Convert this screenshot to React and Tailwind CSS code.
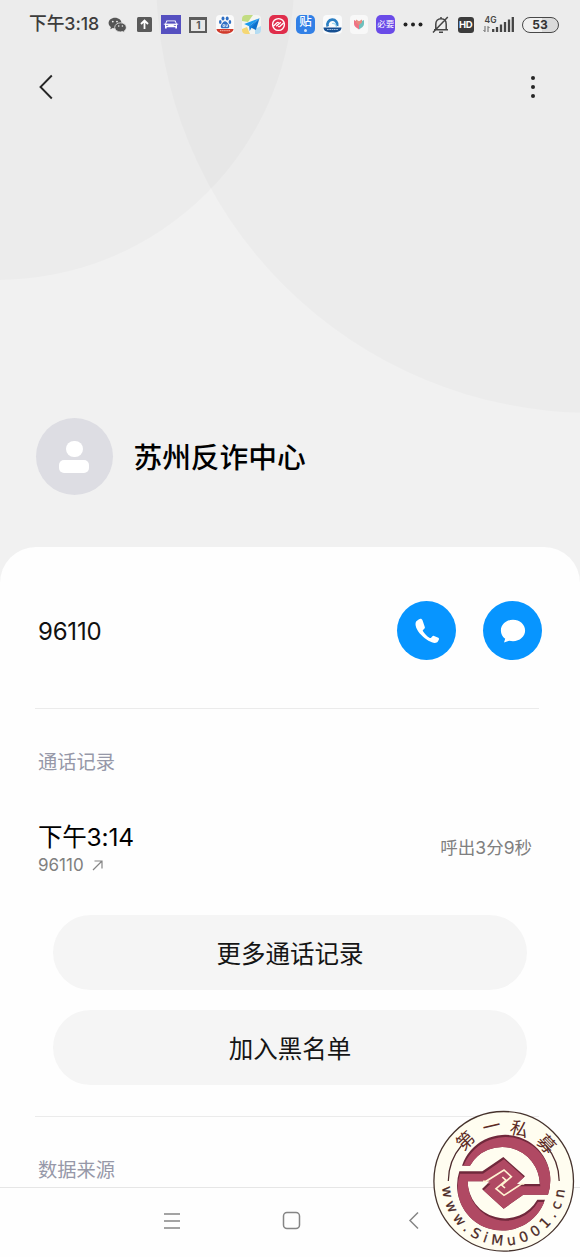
import React from 'react';

const LOGO_MARK =
  'M21 101 A135 135 0 0 1 279 188 L205 188 L146 230 L81 171 L105 148 L38 148 A112 112 0 0 0 247 203 L270 203 A135 135 0 0 1 13 118 L82 118 L145 75 L210 133 L185 156 L254 156 A112 112 0 0 0 45 101 Z';

const Slot = ({ children }) => (
  <div className="flex h-5 w-[26.8px] shrink-0 items-center justify-center">{children}</div>
);

const Backdrop = () => (
  <svg className="absolute left-0 top-0" width="580" height="590" viewBox="0 0 580 590">
    <circle cx="-3" cy="-17" r="297" fill="#000" fillOpacity="0.02" />
    <circle cx="592" cy="-23" r="436" fill="#000" fillOpacity="0.02" />
  </svg>
);

const StatusBar = () => (
  <div className="flex h-12 items-center pl-[29px] pt-px">
    <span className="w-[75.5px] whitespace-nowrap text-[17.8px] font-medium tracking-[-0.1px] text-[#3c3c3c]">下午3:18</span>
    <Slot>
      <svg width="19" height="16" viewBox="0 0 19 16">
        <path d="M7 .8C3.400.8.6 3.100.6 6c0 1.700.9 3.100 2.300 4.100L2.300 12.200l2.500-1.300c.6.200 1.400.3 2.200.3 3.600 0 6.500-2.300 6.500-5.200S10.600.8 7 .8z" fill="#555" />
        <path d="M12.500 5.800c3.200 0 5.800 2 5.800 4.600 0 1.400-.8 2.700-2 3.500l.4 1.700-2.100-1c-.7.200-1.400.3-2.100.3-3.200 0-5.800-2-5.800-4.500s2.600-4.600 5.800-4.600z" fill="#555" stroke="#ededed" strokeWidth=".8" />
        <g fill="#ededed">
          <circle cx="4.800" cy="4.600" r=".9" />
          <circle cx="9" cy="4.600" r=".9" />
          <circle cx="10.700" cy="9" r=".8" />
          <circle cx="14.400" cy="9" r=".8" />
        </g>
      </svg>
    </Slot>
    <Slot>
      <svg width="15" height="15" viewBox="0 0 15 15">
        <rect width="15" height="15" rx="1.500" fill="#5a5a5a" />
        <path d="M7.500 12V4M4 7l3.500-3.500L11 7" fill="none" stroke="#fff" strokeWidth="1.800" />
      </svg>
    </Slot>
    <Slot>
      <svg width="20" height="19" viewBox="0 0 20 19">
        <rect width="20" height="19" fill="#5550c0" />
        <path d="M5.500 5.500h9l1.500 3.700v4.300h-1.700v-1.200H5.700v1.200H4V9.200z" fill="#fff" />
        <path d="M6.300 6.700h7.400l.8 2h-9zM5 10.500h2.200M12.800 10.500H15" fill="#5550c0" stroke="#5550c0" strokeWidth=".7" />
        <path d="M2.800 9.200h14.400" stroke="#fff" strokeWidth=".9" />
      </svg>
    </Slot>
    <Slot>
      <div className="flex h-4 w-[18px] items-center justify-center border-2 border-t-[3px] border-[#5c5c5c] text-[10px] font-bold leading-none text-[#555]">1</div>
    </Slot>
    <Slot>
      <svg width="18" height="19" viewBox="0 0 18 19">
        <rect width="18" height="19" rx="4" fill="#fafafa" />
        <g fill="#2f6fc4">
          <ellipse cx="7" cy="3.500" rx="1.500" ry="2.100" />
          <ellipse cx="11.200" cy="3.500" rx="1.500" ry="2.100" />
          <ellipse cx="4.300" cy="7" rx="1.300" ry="1.900" />
          <ellipse cx="13.900" cy="7" rx="1.300" ry="1.900" />
          <path d="M9 6.200c1.500 0 2 1.300 3.200 2.500 1.600 1.600 1.600 4.600-.8 4.600H6.700c-2.400 0-2.400-3-.8-4.600C7.100 7.500 7.500 6.200 9 6.200z" />
        </g>
        <path d="M7 9.600h1.600v2H7zM10 9.400v2.200h1.500V9.400" fill="none" stroke="#fff" strokeWidth=".7" />
        <path d="M.5 14h17c0 3-4 4.800-8.500 4.800S.5 17 .5 14z" fill="#cf3a2b" />
        <path d="M4 15.700h10" stroke="#f5b4a8" strokeWidth="1" strokeDasharray="1.500 .6" />
      </svg>
    </Slot>
    <Slot>
      <svg width="19" height="19" viewBox="0 0 19 19">
        <rect width="19" height="19" rx="4" fill="#f4f5f2" />
        <path d="M0 6V4a4 4 0 0 1 4-4h7L6 7z" fill="#c2dc82" />
        <path d="M0 14l5-2 3 7H4a4 4 0 0 1-4-4z" fill="#f5d774" />
        <path d="M13 14l6-3v4a4 4 0 0 1-4 4h-2z" fill="#b5dcf2" />
        <path d="M17.500 3.200L2.200 9l4.900 2.300z" fill="#1a9aef" />
        <path d="M17.500 3.200l-8.700 9.200 5.100 2.600z" fill="#0b6fcb" />
        <path d="M17.500 3.200L7.100 11.300l.6 4.700 2-3.400z" fill="#1580dc" />
      </svg>
    </Slot>
    <Slot>
      <svg width="19" height="19" viewBox="0 0 19 19">
        <rect width="19" height="19" rx="5" fill="#e02d4b" />
        <g fill="none" stroke="#fff">
          <circle cx="9.500" cy="9.500" r="5.900" strokeWidth="1.400" />
          <path d="M4.300 11.300L8 7.800q.9-.8 1.800 0M14.700 7.700L11 11.200q-.9.800-1.800 0M7.200 11.300l4.600-4" strokeWidth="1.300" />
        </g>
      </svg>
    </Slot>
    <Slot>
      <div className="flex h-[19px] w-[19px] flex-col items-center rounded-[5px] bg-[#3280e6] text-[12.500px] font-medium leading-[14px] text-white">
        贴
        <span className="h-[3px] w-[3px] rounded-full bg-white/80"></span>
      </div>
    </Slot>
    <Slot>
      <svg width="19" height="19" viewBox="0 0 19 19">
        <rect width="19" height="19" rx="4" fill="#fafbfc" />
        <path d="M4.700 11.500a5 5 0 1 1 9.500-.5" fill="none" stroke="#2c7fc3" strokeWidth="2.700" />
        <path d="M9 8.500c2.500-.5 4 .6 4.500 3.500" fill="none" stroke="#9bd6ef" strokeWidth="1.200" />
        <path d="M.5 12.500h18c0 3.600-3.500 5-9 5s-9-1.400-9-5z" fill="#164f91" />
        <path d="M4 14.500h11" stroke="#9dbce0" strokeWidth="1.200" strokeDasharray="1.700 .6" />
      </svg>
    </Slot>
    <Slot>
      <svg width="18" height="19" viewBox="0 0 18 19">
        <rect width="18" height="19" rx="4" fill="#f8f8f8" />
        <path d="M4 5l5 2.500v7L5.500 12Q4 10.500 4 9z" fill="#ef7385" />
        <path d="M14 5L9 7.500v7l3.500-2.500Q14 10.500 14 9z" fill="#6fc0bd" />
        <path d="M6 4.500l3 1.700 3-1.700v3L9 10 6 7.500z" fill="#e88a80" />
      </svg>
    </Slot>
    <Slot>
      <div className="flex h-[19px] w-[19px] items-center justify-center overflow-hidden whitespace-nowrap rounded-[5px] bg-[#6a4be8] text-[8.500px] leading-none text-white">必要</div>
    </Slot>
    <Slot>
      <svg width="20" height="5" viewBox="0 0 20 5" fill="#222">
        <circle cx="2.500" cy="2.500" r="2" />
        <circle cx="10" cy="2.500" r="2" />
        <circle cx="17.500" cy="2.500" r="2" />
      </svg>
    </Slot>
    <svg className="ml-[6px] shrink-0" width="18" height="18" viewBox="0 0 18 18" fill="none" stroke="#444" strokeWidth="1.500">
      <path d="M2 13.700h14M3.800 13V8.200c0-3.200 1.900-5.400 5.200-5.400s5.200 2.200 5.200 5.400V13M9 1v1.800M7 16.300h4M1 16.500L15.800 1" />
    </svg>
    <div className="ml-[7.500px] flex h-4 w-4 shrink-0 items-center justify-center rounded-[3px] bg-[#3c3c3c] text-[9.500px] font-bold leading-none tracking-[-0.3px] text-white">HD</div>
    <svg className="ml-[9px] shrink-0" width="32" height="20" viewBox="0 0 32 20">
      <text x="1.500" y="7.500" fontSize="8.500" fontWeight="600" fill="#444">4G</text>
      <path d="M2 11v5.500M.5 15l1.500 1.800M5 17v-5.500M5 11.500L6.500 13" fill="none" stroke="#666" strokeWidth="1" />
      <path d="M10.200 14v3M14 12v5M18 9.500V17M22 7v10M26 4.500V17M29.800 2v15" stroke="#444" strokeWidth="2.300" />
    </svg>
    <div className="ml-[7px] flex h-4 w-[37px] shrink-0 items-center justify-center rounded-full border-[1.500px] border-[#484848] bg-[linear-gradient(90deg,#f0f0f0_54%,#dadada_54%)] text-[12px] font-bold leading-none text-[#333]">53</div>
  </div>
);

const SiteLogo = () => (
  <svg className="absolute left-[433px] top-[1110px]" width="142" height="143" viewBox="0 0 142 143">
    <defs>
      <clipPath id="mark"><path d={LOGO_MARK} /></clipPath>
      <filter id="soft"><feGaussianBlur stdDeviation="2" /></filter>
      <path id="lower" d="M9.200 74 A61.500 61.500 0 0 0 132.200 74" />
    </defs>
    <circle cx="70.700" cy="71.300" r="69.800" fill="#fffdf0" stroke="#46332d" strokeWidth="1.300" />
    <path d="M15.300 71 A55.500 55.500 0 0 1 28.500 35.500 M126.200 71 A55.500 55.500 0 0 0 112.900 35.500" fill="none" stroke="#4d2a2c" strokeWidth="1.200" />
    <g transform="translate(22 22) scale(.3333)">
      <path d={LOGO_MARK} fill="#70283b" />
      <g clipPath="url(#mark)">
        <path d={LOGO_MARK} fill="#b04a63" transform="translate(2 7)" filter="url(#soft)" />
      </g>
      <path d="M84 148H93L147 114L169 134L140 159L150 168M208 156H199L147 190L123 170L153 145L142 135" fill="none" stroke="#fff3d2" strokeWidth="5" />
    </g>
    <g fontSize="18" fill="#5c2a24" textAnchor="middle">
      <text transform="translate(32.500 30.500) rotate(-43)" y="6.500">第</text>
      <text transform="translate(58.500 16.500) rotate(-13)" y="6.500">一</text>
      <text transform="translate(86.500 19) rotate(15)" y="6.500">私</text>
      <text transform="translate(113.500 34) rotate(46)" y="6.500">募</text>
    </g>
    <text className="font-['DejaVu_Sans',sans-serif]" fontSize="14" fill="#4b2926" stroke="#4b2926" strokeWidth=".25" textLength="184" lengthAdjust="spacing">
      <textPath href="#lower" startOffset="3">www.SiMu001.cn</textPath>
    </text>
  </svg>
);

const App = () => {
  return (
    <div className="relative flex h-[1257px] w-[580px] flex-col overflow-hidden bg-[#f1f1f1] font-['Inter','Noto_Sans_CJK_SC',sans-serif]">
      <Backdrop />
      <div className="relative flex h-[547px] flex-col">
        <StatusBar />
        <div className="flex h-[78px] items-center justify-between pl-[38px] pr-[45px]">
          <svg width="16" height="26" viewBox="0 0 16 26">
            <path d="M13.800 1.500L2.500 13l11.300 11.500" fill="none" stroke="#262626" strokeWidth="1.900" />
          </svg>
          <svg width="4" height="24" viewBox="0 0 4 24" fill="#262626">
            <circle cx="2" cy="3" r="2" />
            <circle cx="2" cy="12" r="2" />
            <circle cx="2" cy="21" r="2" />
          </svg>
        </div>
        <div className="mt-auto mb-[52px] flex items-center pl-[35.500px]">
          <div className="flex h-[77px] w-[77px] flex-col items-center justify-center gap-[3px] rounded-full bg-[#dddde3]">
            <div className="h-4 w-[17px] rounded-full bg-white"></div>
            <div className="h-[13px] w-[30px] rounded-[5px] bg-white"></div>
          </div>
          <h1 className="ml-[21px] pt-[3px] text-[28.700px] font-medium leading-none text-black">苏州反诈中心</h1>
        </div>
      </div>

      <div className="relative h-[640px] shrink-0 overflow-hidden rounded-t-[36px] bg-[#fefefe]">
        <div className="flex h-[161px] items-center justify-between pl-[38px] pr-[38px] pt-[6px]">
          <span className="pt-[2px] text-[24px] tracking-[-0.2px] text-[#111]">96110</span>
          <div className="flex gap-[27px]">
            <button className="flex h-[59px] w-[59px] items-center justify-center rounded-full bg-[#0795ff]">
              <svg width="26" height="26" viewBox="0 0 26 26">
                <path d="M5 1.200L2.300 3.200C.2 6.200 2.400 12 7.300 17c5.300 5.500 11.700 8.900 15.300 7.600.9-.4 1.700-1.700 2.300-3.100.3-.8 0-1.300-.6-1.700l-4.200-1.900c-.7-.3-1.200-.1-1.700.4l-1.300 1.400c-.5.500-1.100.5-1.700.1-2.600-1.600-4.900-4-6.400-6.500-.4-.7-.2-1.200.3-1.600l1.200-1.100c.5-.5.500-1 .3-1.600L8.600 2.400C8 .8 6.500.1 5 1.200z" fill="#fff" />
              </svg>
            </button>
            <button className="flex h-[59px] w-[59px] items-center justify-center rounded-full bg-[#0795ff]">
              <svg width="26" height="24" viewBox="0 0 26 24">
                <path d="M13 .8C6.300.8.900 5.500.900 11.500c0 3.400 1.600 6.400 4.300 8.300L4 23.500l5.200-1.800c1.200.3 2.500.5 3.800.5 6.700 0 12.100-4.700 12.100-10.700S19.700.8 13 .8z" fill="#fff" />
              </svg>
            </button>
          </div>
        </div>

        <div className="ml-[35px] mr-[41px] h-px bg-[#ebebeb]"></div>

        <div className="pl-[38px] pt-[43px] text-[19.250px] leading-5 text-[#9698a8]">通话记录</div>

        <div className="mt-[45px] flex h-[62px] items-center justify-between pl-[38px] pr-[48px]">
          <div>
            <div className="text-[24.500px] leading-[34px] tracking-[-0.2px] text-black">下午3:14</div>
            <div className="flex items-center text-[17px] leading-[22px] text-[#808080]">
              96110
              <svg className="ml-2" width="11" height="11" viewBox="0 0 11 11">
                <path d="M1 10L10 1M2.500 1H10v7.500" fill="none" stroke="#858585" strokeWidth="1.200" />
              </svg>
            </div>
          </div>
          <span className="text-[17.500px] text-[#808080]">呼出3分9秒</span>
        </div>

        <div className="ml-[53px] mt-[36px] flex w-[474px] flex-col gap-5">
          <button className="h-[75px] rounded-full bg-[#f5f5f5] pt-[3px] text-[24.500px] text-[#151515]">更多通话记录</button>
          <button className="h-[75px] rounded-full bg-[#f5f5f5] pt-[3px] text-[24.500px] text-[#151515]">加入黑名单</button>
        </div>

        <div className="ml-[35px] mr-[41px] mt-[31px] h-px bg-[#ebebeb]"></div>
        <div className="pl-[38px] pt-[43px] text-[19.250px] leading-5 text-[#9698a8]">数据来源</div>
      </div>

      <div className="relative flex h-[70px] items-center border-t border-[#e6e6e6] bg-[#fefefe] pb-1 pl-[163px]">
        <svg width="18" height="18" viewBox="0 0 18 18">
          <path d="M1 2h16M1 9h16M1 16h16" stroke="#858585" strokeWidth="1.500" />
        </svg>
        <svg className="ml-[101px]" width="19" height="19" viewBox="0 0 19 19">
          <rect x="1.500" y="1.500" width="16" height="16" rx="3.500" fill="none" stroke="#858585" strokeWidth="1.500" />
        </svg>
        <svg className="ml-[107px]" width="12" height="19" viewBox="0 0 12 19">
          <path d="M10 1.500L2 9.500l8 8" fill="none" stroke="#858585" strokeWidth="1.500" />
        </svg>
      </div>
      <SiteLogo />
    </div>
  );
};

export default App;
